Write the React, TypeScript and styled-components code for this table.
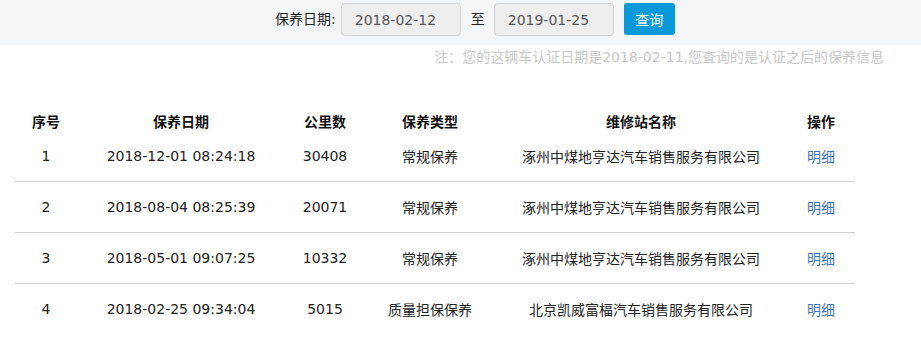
import React from 'react';
import styled, { createGlobalStyle } from 'styled-components';

const GlobalStyle = createGlobalStyle`
  body {
    margin: 0;
    background: #fff;
    font-family: "DejaVu Sans", Verdana, "Noto Sans CJK SC", sans-serif;
    font-size: 14px;
    color: #222;
  }
`;

type Record = {
  id: number;
  date: string;
  mileage: string;
  type: string;
  station: string;
};

const records: Record[] = [
  { id: 1, date: '2018-12-01 08:24:18', mileage: '30408', type: '常规保养', station: '涿州中煤地亨达汽车销售服务有限公司' },
  { id: 2, date: '2018-08-04 08:25:39', mileage: '20071', type: '常规保养', station: '涿州中煤地亨达汽车销售服务有限公司' },
  { id: 3, date: '2018-05-01 09:07:25', mileage: '10332', type: '常规保养', station: '涿州中煤地亨达汽车销售服务有限公司' },
  { id: 4, date: '2018-02-25 09:34:04', mileage: '5015', type: '质量担保保养', station: '北京凯威富楅汽车销售服务有限公司' },
];

const columns = [
  { title: '序号', width: 62 },
  { title: '保养日期', width: 208 },
  { title: '公里数', width: 80 },
  { title: '保养类型', width: 130 },
  { title: '维修站名称', width: 292 },
  { title: '操作', width: 68 },
];

const App = () => {
  return (
    <Page>
      <GlobalStyle />
      <SearchBar>
        <Label>保养日期:</Label>
        <DateInput defaultValue='2018-02-12' />
        <Separator>至</Separator>
        <DateInput defaultValue='2019-01-25' />
        <QueryButton>查询</QueryButton>
      </SearchBar>
      <Notice>注：您的这辆车认证日期是2018-02-11,您查询的是认证之后的保养信息</Notice>
      <Table>
        <colgroup>
          {columns.map((c) => (
            <col key={c.title} style={{ width: c.width }} />
          ))}
        </colgroup>
        <thead>
          <tr>
            {columns.map((c) => (
              <HeadCell key={c.title}>{c.title}</HeadCell>
            ))}
          </tr>
        </thead>
        <tbody>
          {records.map((r) => (
            <Row key={r.id}>
              <Cell>{r.id}</Cell>
              <Cell>{r.date}</Cell>
              <Cell>{r.mileage}</Cell>
              <Cell>{r.type}</Cell>
              <Cell>{r.station}</Cell>
              <Cell>
                <DetailLink href='#'>明细</DetailLink>
              </Cell>
            </Row>
          ))}
        </tbody>
      </Table>
    </Page>
  );
};

export default App;

const Page = styled.div`
  width: 921px;
`;

const SearchBar = styled.div`
  height: 45px;
  background: #f4f5f7;
  display: flex;
  align-items: flex-start;
  padding: 3px 0 0 275px;
  box-sizing: border-box;
`;

const Label = styled.span`
  line-height: 33px;
  margin-right: 5px;
  color: #222;
`;

const DateInput = styled.input`
  width: 120px;
  height: 33px;
  box-sizing: border-box;
  border: 1px solid #d2d2d2;
  border-radius: 4px;
  background: #eeeeee;
  padding: 0 13px;
  font-family: inherit;
  font-size: 14px;
  color: #555;
  outline: none;
`;

const Separator = styled.span`
  line-height: 33px;
  margin: 0 9px 0 10px;
`;

const QueryButton = styled.button`
  width: 51px;
  height: 32px;
  margin-left: 10px;
  border: none;
  border-radius: 3px;
  background: #0a9ad9;
  color: #fff;
  font-family: inherit;
  font-size: 14px;
  padding: 0;
`;

const Notice = styled.div`
  margin-top: 2px;
  line-height: 20px;
  text-align: right;
  padding-right: 37px;
  color: #c8c8c8;
`;

const Table = styled.table`
  margin: 44px 0 0 15px;
  width: 840px;
  border-collapse: collapse;
  table-layout: fixed;
`;

const HeadCell = styled.th`
  height: 20px;
  padding: 0;
  font-weight: bold;
  text-align: center;
  color: #111;
`;

const Row = styled.tr`
  border-bottom: 1px solid #d0d0d0;
  &:last-child {
    border-bottom: none;
  }
`;

const Cell = styled.td`
  height: 50px;
  padding: 0;
  text-align: center;
  white-space: nowrap;
`;

const DetailLink = styled.a`
  color: #3c76b6;
  text-decoration: none;
`;
